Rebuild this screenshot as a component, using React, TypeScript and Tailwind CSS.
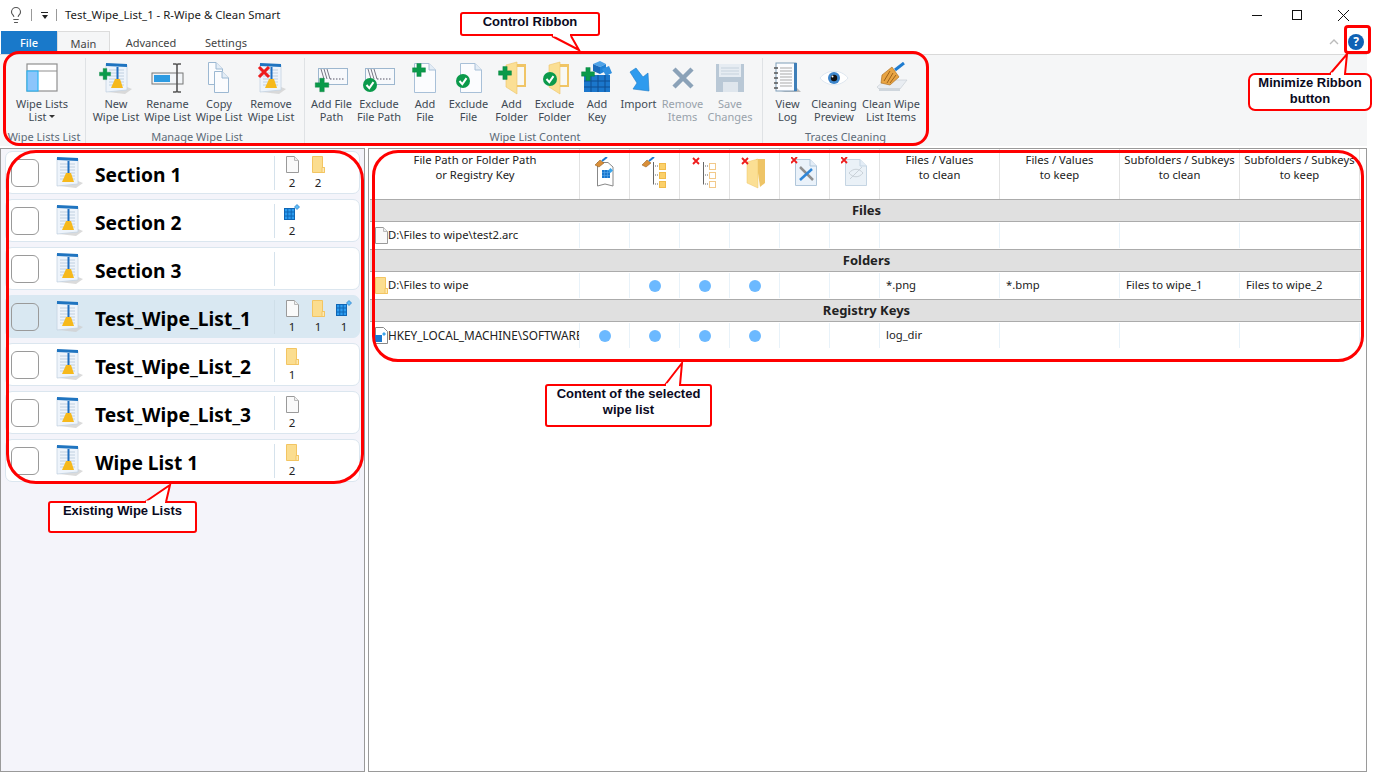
import React from "react";
import { Lightbulb } from "lucide-react";

const W = ({ children, w = 36, h = 36 }: { children: React.ReactNode; w?: number; h?: number }) => (
  <svg width={w} height={h} viewBox={`0 0 ${w} ${h}`} className="shrink-0">{children}</svg>
);

const Plus = ({ x, y, s = 1 }: { x: number; y: number; s?: number }) => (
  <path transform={`translate(${x} ${y}) scale(${s})`} d="M-3 -9H3V-3H9V3H3V9H-3V3H-9V-3H-3Z" fill="#0a9a4a" stroke="#087a3a" strokeWidth="0.5" />
);
const Check = ({ x, y, r = 7 }: { x: number; y: number; r?: number }) => (
  <g>
    <circle cx={x} cy={y} r={r} fill="#0b9a4b" />
    <path d={`M${x - r * 0.5} ${y}L${x - r * 0.1} ${y + r * 0.45}L${x + r * 0.5} ${y - r * 0.4}`} fill="none" stroke="#fff" strokeWidth="2" />
  </g>
);
const RedX = ({ x, y, s = 6 }: { x: number; y: number; s?: number }) => (
  <path d={`M${x - s} ${y - s}L${x + s} ${y + s}M${x + s} ${y - s}L${x - s} ${y + s}`} stroke="#ee1c1c" strokeWidth={s * 0.62} />
);
const DocBroom = () => (
  <g>
    <path d="M4 30L21 32L28 27L23 25Z" fill="#cfcfcf" opacity="0.75" />
    <path d="M2 2L23 3V28L2 30Z" fill="#eef4fb" stroke="#c4d3e2" strokeWidth="0.8" />
    <path d="M2 1L23 2V5L2 4Z" fill="#1f74c0" />
    <path d="M5 8H20M5 11H20M5 14H20M5 17H20M5 20H20M5 23H20" stroke="#b4c8da" strokeWidth="0.8" />
    <path d="M13.5 5V17" stroke="#1f6fc0" strokeWidth="2" />
    <path d="M11 17H16L19 26L7 26Z" fill="#f6b91c" />
  </g>
);
const WipeDoc = () => <W w={28} h={33}><DocBroom /></W>;

const DocShape = ({ x = 0, y = 0, w = 22, h = 30, fill = "#fbfcfe", stroke = "#a8c0d8" }: { x?: number; y?: number; w?: number; h?: number; fill?: string; stroke?: string }) => (
  <g>
    <path d={`M${x + 0.5} ${y + 0.5}H${x + w - 7}L${x + w - 0.5} ${y + 7}V${y + h - 0.5}H${x + 0.5}Z`} fill={fill} stroke={stroke} />
    <path d={`M${x + w - 7} ${y + 0.5}V${y + 7}H${x + w - 0.5}`} fill="#e4edf6" stroke={stroke} />
  </g>
);
const OpenFolder = () => (
  <g>
    <path d="M14 3H26V26H14Z" fill="#f0c566" />
    <path d="M16 6H24V24H16Z" fill="#f8f8f4" />
    <path d="M6 4L17 1V33L6 26Z" fill="#fbdf94" stroke="#eec566" strokeWidth="0.6" />
  </g>
);
const PathBox = () => (
  <g>
    <rect x="5.5" y="5.5" width="29" height="16" fill="#f7f9fc" stroke="#9db7cf" />
    <path d="M8 6L11 16M11 6L14 16M14 6L17 16" stroke="#556" strokeWidth="0.8" />
    <path d="M17 16H32" stroke="#556" strokeWidth="1.2" strokeDasharray="1.5 1.5" />
  </g>
);
const Cubes = () => (
  <g>
    <path d="M13 3L20 0L26 3L20 6Z" fill="#4ea3e8" />
    <path d="M13 3L20 6V13L13 10Z" fill="#1a6bbb" /><path d="M26 3L20 6V13L26 10Z" fill="#1f82d6" />
    <path d="M22 8L29 5L32 12L26 15Z" fill="#2f8fdf" />
    <path d="M4 14H30V31H4Z" fill="#1b77cc" />
    <path d="M4 20H30M4 26H30M11 14V31M18 14V31M25 14V31" stroke="#0e4f92" strokeWidth="1" />
  </g>
);

const icons: Record<string, React.ReactNode> = {
  list: <W w={32} h={30}><rect x="1" y="1" width="30" height="27" fill="#fff" stroke="#8f8f8f" strokeWidth="1.2" /><path d="M1 8H31" stroke="#8f8f8f" /><rect x="1" y="8" width="11" height="20" fill="#8cc5fb" stroke="#2db4f2" strokeWidth="1.2" /></W>,
  new: <W w={34} h={34}><g transform="translate(5 1)"><DocBroom /></g><Plus x={6} y={13} s={0.62} /></W>,
  rename: <W w={34} h={32}><rect x="1" y="11" width="31" height="11" fill="#f2f5f8" stroke="#777" /><rect x="3" y="13" width="16" height="7" fill="#2d9be2" /><path d="M26 3V29M22 2H25L26 3L27 2H30M22 30H25L26 29L27 30H30" stroke="#555" strokeWidth="1.6" fill="none" /></W>,
  copy: <W w={24} h={32}><DocShape x={1} y={0} w={15} h={23} stroke="#9cb8d2" /><DocShape x={7} y={9} w={15} h={22} stroke="#9cb8d2" /></W>,
  remove: <W w={30} h={34}><g transform="translate(2 1)"><DocBroom /></g><RedX x={8} y={11} s={5} /></W>,
  addpath: <W w={36} h={32}><g transform="translate(-1 1)"><PathBox /></g><Plus x={8} y={23} s={0.75} /></W>,
  excpath: <W w={36} h={32}><g transform="translate(-1 1)"><PathBox /></g><Check x={9} y={23} r={7} /></W>,
  addfile: <W w={26} h={32}><DocShape x={2} y={1} w={22} h={30} /><Plus x={7} y={8} s={0.72} /></W>,
  excfile: <W w={30} h={32}><DocShape x={6} y={1} w={22} h={30} /><Check x={9} y={19} r={7} /></W>,
  addfolder: <W w={28} h={34}><g transform="translate(2 0)"><OpenFolder /></g><Plus x={7} y={12} s={0.72} /></W>,
  excfolder: <W w={28} h={34}><g transform="translate(2 0)"><OpenFolder /></g><Check x={9} y={18} r={7} /></W>,
  addkey: <W w={34} h={34}><Cubes /><Plus x={8} y={13} s={0.72} /></W>,
  import: <W w={26} h={30}><path d="M4 9L10 5L17 14L22 10L23 28L7 26L11 20Z" fill="#2e9bee" stroke="#1a7bc8" strokeWidth="0.6" /></W>,
  delitems: <W w={24} h={24}><path d="M3 3L21 21M21 3L3 21" stroke="#8ba2b8" strokeWidth="4.5" /></W>,
  save: <W w={30} h={30}><path d="M1 1H29V29H1Z" fill="#b9c8d6" /><rect x="4" y="1" width="22" height="13" fill="#e6ecf2" /><path d="M6 5H24M6 8H24M6 11H24" stroke="#c6d2dd" /><rect x="8" y="19" width="15" height="10" fill="#dfe6ed" /></W>,
  log: <W w={30} h={32}><path d="M8 30L28 30L24 26Z" fill="#bbb" /><rect x="3" y="1" width="20" height="28" fill="#fbfcfe" stroke="#7f9db8" /><rect x="21" y="1" width="3" height="28" fill="#3f7fb8" /><path d="M7 6H19M7 9H19M7 12H19M7 15H19M7 18H19M7 21H19M7 24H19" stroke="#a9a9a9" /><path d="M1 6H5M1 11H5M1 16H5M1 21H5M1 26H5" stroke="#555" strokeWidth="1.4" /></W>,
  eye: <W w={30} h={18}><path d="M1 9C8 0 22 0 29 9C22 18 8 18 1 9Z" fill="#fff" stroke="#dfe7f0" /><circle cx="15" cy="9" r="6" fill="#3d86cc" /><circle cx="15" cy="9" r="3.2" fill="#111" /><circle cx="13.5" cy="7.5" r="1" fill="#fff" /></W>,
  clean: <W w={34} h={32}><path d="M3 25L11 18H33L26 27H5Z" fill="#e9edf2" stroke="#c2c9d0" strokeWidth="0.6" /><path d="M5 26H26V29H5Z" fill="#cfd6dd" /><path d="M8 13L18 5L25 15L16 23L7 21Z" fill="#e8a443" stroke="#a5661a" strokeWidth="0.6" /><path d="M10 19L16 9M13 21L19 11M16 21L22 13" stroke="#8a5210" strokeWidth="0.8" /><path d="M21 8L30 1" stroke="#1f7cd0" strokeWidth="3" /></W>,
};

type Btn = { i: string; l: string[]; w: string; off?: boolean; arrow?: boolean };
const RBtn = ({ b }: { b: Btn }) => (
  <div className={`flex flex-col items-center shrink-0 ${b.w}`}>
    <div className="h-[39px] w-full flex items-center justify-center">{icons[b.i]}</div>
    <div className={`text-center leading-[13px] whitespace-nowrap ${b.off ? "text-[#98a2ab]" : "text-[#3f4a54]"}`}>
      <div>{b.l[0]}</div>
      <div className="flex items-center justify-center gap-[3px]">
        {b.l[1]}
        {b.arrow && <span className="w-0 h-0 border-x-[3px] border-x-transparent border-t-[3px] border-t-[#333]" />}
      </div>
    </div>
  </div>
);
const Group = ({ label, w, pad, items, sep = true }: { label: string; w: string; pad: string; items: Btn[]; sep?: boolean }) => (
  <div className={`flex flex-col shrink-0 h-full ${w} ${pad} ${sep ? "border-r border-[#dfe2e5]" : ""}`}>
    <div className="flex h-[73px]">{items.map((b) => <RBtn key={b.i} b={b} />)}</div>
    <div className="mt-auto mb-[1px] text-center text-[#5d6b78] leading-[14px] whitespace-nowrap">{label}</div>
  </div>
);

const FileMini = () => <svg width="13" height="17" viewBox="0 0 13 17"><path d="M.5.5H8.5L12.5 4.5V16.5H.5Z" fill="#fafafa" stroke="#9a9a9a" /><path d="M8.5.5V4.5H12.5" fill="#eee" stroke="#bbb" /></svg>;
const FolderMini = () => <svg width="13" height="17" viewBox="0 0 13 17"><path d="M.5.5H10.5V11.5H12.5V16.5H.5Z" fill="#fbdd8f" stroke="#f3c562" /><path d="M10 11.5H12.5V16.5H10Z" fill="#fde9b4" stroke="#f3c562" /></svg>;
const KeyMini = () => <svg width="16" height="16" viewBox="0 0 16 16"><rect x="0.5" y="4.5" width="10" height="11" fill="#2b9cf0" stroke="#0f66b5" /><path d="M3.8 4.5V15.5M7.2 4.5V15.5M.5 8H10.5M.5 12H10.5" stroke="#0f66b5" /><path d="M13 .5L15.5 3L13 5.5L10.5 3Z" fill="#5ebcf7" stroke="#1c79c8" strokeWidth="0.7" /></svg>;

type M = { k: "f" | "d" | "r"; n: number };
const rows: { name: string; minis: M[]; sel?: boolean }[] = [
  { name: "Section 1", minis: [{ k: "f", n: 2 }, { k: "d", n: 2 }] },
  { name: "Section 2", minis: [{ k: "r", n: 2 }] },
  { name: "Section 3", minis: [] },
  { name: "Test_Wipe_List_1", sel: true, minis: [{ k: "f", n: 1 }, { k: "d", n: 1 }, { k: "r", n: 1 }] },
  { name: "Test_Wipe_List_2", minis: [{ k: "d", n: 1 }] },
  { name: "Test_Wipe_List_3", minis: [{ k: "f", n: 2 }] },
  { name: "Wipe List 1", minis: [{ k: "d", n: 2 }] },
];

const Card = ({ r }: { r: (typeof rows)[number] }) => (
  <div className={`h-[43px] flex items-center rounded-[7px] border ${r.sel ? "bg-[#d9e8f2] border-[#d9e8f2]" : "bg-white border-[#dbe6ef]"}`}>
    <div className="ml-[5px] w-[28px] h-[28px] rounded-[6px] border border-[#9a9a9a] shrink-0" />
    <div className="ml-[16px] w-[28px] shrink-0 flex"><WipeDoc /></div>
    <div className="ml-[12px] w-[179px] shrink-0 pt-[4px] font-bold text-[19.2px] leading-none text-black whitespace-nowrap">{r.name}</div>
    <div className={`h-[34px] w-px shrink-0 ${r.sel ? "bg-[#cfdfe9]" : "bg-[#d5e2ec]"}`} />
    <div className="flex pl-[4px]">
      {r.minis.map((m, i) => (
        <div key={i} className="w-[26px] h-[34px] flex flex-col items-center">
          <div className="h-[19px]">{m.k === "f" ? <FileMini /> : m.k === "d" ? <FolderMini /> : <KeyMini />}</div>
          <div className="leading-[15px] text-[11.5px] text-[#222]">{m.n}</div>
        </div>
      ))}
    </div>
  </div>
);

const Broomlet = () => <g><path d="M1 8L6 3L10 6L5 10Z" fill="#d98f3a" stroke="#8a5210" strokeWidth="0.5" /><path d="M8 4L13 0" stroke="#1f7cd0" strokeWidth="2" /></g>;
const Tree = ({ fill, stroke }: { fill: string; stroke: string }) => (
  <g>
    <path d="M12.5 5V27" stroke="#666" strokeWidth="1" />
    <path d="M12 9H18M12 18H18M12 27H18" stroke="#666" strokeWidth="1" strokeDasharray="1 1" />
    <rect x="18.5" y="6.5" width="6" height="6" fill={fill} stroke={stroke} /><rect x="18.5" y="15.5" width="6" height="6" fill={fill} stroke={stroke} /><rect x="18.5" y="24.5" width="6" height="6" fill={fill} stroke={stroke} />
  </g>
);
const headIcons: React.ReactNode[] = [
  <svg width="22" height="30" viewBox="0 0 22 30" key="a"><path d="M3.5 5.5H14L19 10V29L11 27L3.5 29Z" fill="#fff" stroke="#888" /><rect x="8" y="13" width="8" height="8" fill="#1a78cf" /><path d="M8 15.5H16M8 18.5H16M10.5 13V21M13.5 13V21" stroke="#5aa8e8" strokeWidth="0.6" /><path d="M16.5 11L19 13.5L16.5 16L14 13.5Z" fill="#3aa4ea" /><Broomlet /></svg>,
  <svg width="28" height="32" viewBox="0 0 28 32" key="b"><Broomlet /><Tree fill="#fbd06a" stroke="#f0bb4a" /></svg>,
  <svg width="28" height="32" viewBox="0 0 28 32" key="c"><RedX x={5} y={4} s={3} /><Tree fill="#fff" stroke="#f2c98a" /></svg>,
  <svg width="28" height="32" viewBox="0 0 28 32" key="d"><path d="M15 2H24V26L19 30Z" fill="#eec466" /><path d="M6 5L17 2V31L6 26Z" fill="#fbdf94" stroke="#eec566" strokeWidth="0.5" /><RedX x={4} y={4} s={3} /></svg>,
  <svg width="28" height="32" viewBox="0 0 28 32" key="e"><DocShape x={4} y={2} w={22} h={27} fill="#eaf2fa" stroke="#b0c6da" /><path d="M9 10L22 23" stroke="#8f8f8f" strokeWidth="2.5" /><path d="M21 12L9 23" stroke="#2e86d8" strokeWidth="2.5" /><RedX x={3} y={3} s={3} /></svg>,
  <svg width="28" height="32" viewBox="0 0 28 32" key="f"><DocShape x={4} y={2} w={22} h={27} fill="#eaf1f7" stroke="#c5d5e3" /><path d="M8 16C12 11 18 11 22 16C18 21 12 21 8 16ZM9 22L21 10" fill="none" stroke="#c9d1d8" /><RedX x={3} y={3} s={3} /></svg>,
];

const cols = "grid grid-cols-[209px_repeat(6,50px)_repeat(4,120px)]";
const headers = [["Files / Values", "to clean"], ["Files / Values", "to keep"], ["Subfolders / Subkeys", "to clean"], ["Subfolders / Subkeys", "to keep"]];

const GroupRow = ({ t }: { t: string }) => (
  <div className="h-[23px] bg-[#e0e0e0] border-y border-[#ababab] text-center font-bold text-[13px] leading-[20px] text-[#222]">{t}</div>
);
const Dot = () => <span className="block w-[12px] h-[12px] rounded-full bg-[#6cb9ff]" />;
const Data = ({ icon, path, pathCls = "", vals }: { icon: React.ReactNode; path: string; pathCls?: string; vals: (string | boolean)[] }) => (
  <div className={`${cols} h-[27px] ml-px`}>
    <div className="flex items-center border-r border-[#e8f2f9] pl-[4px] overflow-hidden my-px">
      <span className="w-[13px] shrink-0 flex">{icon}</span>
      <span className={`whitespace-nowrap ${pathCls}`}>{path}</span>
    </div>
    {vals.map((v, i) => (
      <div key={i} className={`flex items-center border-r border-[#e8f2f9] my-px ${i < 6 ? "justify-center" : "pl-[6px]"}`}>
        {v === true ? <Dot /> : v === false ? null : v}
      </div>
    ))}
  </div>
);

const Frame = ({ cls }: { cls: string }) => <div className={`absolute border-[3px] border-[#ff0000] pointer-events-none ${cls}`} />;
const Note = ({ cls, lines }: { cls: string; lines: string[] }) => (
  <div className={`absolute bg-white border-[2px] border-[#ff0000] text-center font-bold text-[13px] leading-[16px] text-[#0a0a1e] font-['Liberation_Sans',sans-serif] ${cls}`}>
    {lines.map((l) => <div key={l}>{l}</div>)}
  </div>
);

const rib1: Btn[] = [{ i: "list", l: ["Wipe Lists", "List"], w: "w-[78px]", arrow: true }];
const rib2: Btn[] = [
  { i: "new", l: ["New", "Wipe List"], w: "w-[52px]" },
  { i: "rename", l: ["Rename", "Wipe List"], w: "w-[51px]" },
  { i: "copy", l: ["Copy", "Wipe List"], w: "w-[52px]" },
  { i: "remove", l: ["Remove", "Wipe List"], w: "w-[52px]" },
];
const rib3: Btn[] = [
  { i: "addpath", l: ["Add File", "Path"], w: "w-[47px]" },
  { i: "excpath", l: ["Exclude", "File Path"], w: "w-[48px]" },
  { i: "addfile", l: ["Add", "File"], w: "w-[44px]" },
  { i: "excfile", l: ["Exclude", "File"], w: "w-[43px]" },
  { i: "addfolder", l: ["Add", "Folder"], w: "w-[43px]" },
  { i: "excfolder", l: ["Exclude", "Folder"], w: "w-[43px]" },
  { i: "addkey", l: ["Add", "Key"], w: "w-[42px]" },
  { i: "import", l: ["Import", ""], w: "w-[41px]" },
  { i: "delitems", l: ["Remove", "Items"], w: "w-[47px]", off: true },
  { i: "save", l: ["Save", "Changes"], w: "w-[48px]", off: true },
];
const rib4: Btn[] = [
  { i: "log", l: ["View", "Log"], w: "w-[45px]" },
  { i: "eye", l: ["Cleaning", "Preview"], w: "w-[48px]" },
  { i: "clean", l: ["Clean Wipe", "List Items"], w: "w-[66px]" },
];

export default function App() {
  return (
    <div className="relative w-[1374px] h-[773px] overflow-hidden bg-white flex flex-col font-['Noto_Sans',sans-serif] text-[11px] text-[#222]">
      {/* title bar */}
      <div className="h-[30px] shrink-0 flex items-center">
        <Lightbulb size={18} strokeWidth={1.5} className="ml-[7px] text-[#555]" />
        <span className="ml-[6px] w-px h-[12px] bg-[#999]" />
        <span className="ml-[9px] flex flex-col items-center gap-[2px]">
          <span className="w-[7px] h-px bg-[#222]" />
          <span className="w-0 h-0 border-x-[3.5px] border-x-transparent border-t-[4px] border-t-[#222]" />
        </span>
        <span className="ml-[8px] w-px h-[12px] bg-[#999]" />
        <span className="ml-[8px] text-[11.4px] whitespace-nowrap text-[#1a1a1a]">Test_Wipe_List_1 - R-Wipe &amp; Clean Smart</span>
        <div className="ml-auto flex items-center mr-[24px]">
          <svg width="11" height="11" viewBox="0 0 11 11"><path d="M0 5.5H10" stroke="#111" /></svg>
          <svg className="ml-[29px]" width="11" height="11" viewBox="0 0 11 11"><rect x="0.5" y="0.5" width="9" height="9" fill="none" stroke="#111" /></svg>
          <svg className="ml-[34px]" width="13" height="13" viewBox="0 0 13 13"><path d="M1 1L12 12M12 1L1 12" stroke="#111" /></svg>
        </div>
      </div>
      {/* tabs */}
      <div className="h-[24px] shrink-0 flex items-end pl-px">
        <div className="w-[56px] h-[23px] bg-[#1979ca] text-white text-center leading-[24px] font-medium">File</div>
        <div className="w-[53px] h-[23px] bg-[#f5f6f7] border-x border-t border-[#dcdcdc] text-center leading-[24px] text-[#444]">Main</div>
        <div className="w-[82px] h-[23px] text-center leading-[24px] text-[#444]">Advanced</div>
        <div className="w-[68px] h-[23px] text-center leading-[24px] text-[#444]">Settings</div>
        <div className="ml-auto mr-[10px] flex items-center h-[23px] gap-[9px] pb-[2px]">
          <svg width="10" height="6" viewBox="0 0 10 6"><path d="M1 5L5 1L9 5" fill="none" stroke="#bbb" strokeWidth="1.4" /></svg>
          <span className="w-[16px] h-[16px] rounded-full bg-[#0f62b5] text-white font-bold text-[12px] leading-[16px] text-center">?</span>
        </div>
      </div>
      {/* ribbon */}
      <div className="h-[92px] w-[1367px] shrink-0 bg-[#f5f6f7] border-t border-[#d9d9d9] flex pt-[3px] pb-[1px]">
        <Group label="Wipe Lists List" w="w-[86px]" pad="pl-[3px]" items={rib1} />
        <Group label="Manage Wipe List" w="w-[219px]" pad="pl-[4px]" items={rib2} />
        <Group label="Wipe List Content" w="w-[458px]" pad="pl-[3px]" items={rib3} />
        <Group label="Traces Cleaning" w="w-[163px]" pad="pl-[2px]" items={rib4} sep={false} />
      </div>
      {/* body */}
      <div className="flex-1 flex pt-[2px] pb-[1px] w-[1367px] gap-[3px] items-stretch">
        <div className="w-[365px] shrink-0 bg-[#f4f4fa] border border-[#9a9a9a] px-[4px] pt-[2px] flex flex-col gap-[5px]">
          {rows.map((r) => <Card key={r.name} r={r} />)}
        </div>
        <div className="flex-1 bg-white border border-[#9a9a9a] pl-px min-w-0">
          <div className={`${cols} h-[50px] ml-px`}>
            <div className="border-r border-[#e2e2e2] text-center text-[11.25px] leading-[15px] pt-[3px] text-[#222]">
              <div>File Path or Folder Path</div><div>or Registry Key</div>
            </div>
            {headIcons.map((ic, i) => <div key={i} className="border-r border-[#e2e2e2] flex justify-center pt-[8px]">{ic}</div>)}
            {headers.map((h, i) => (
              <div key={i} className="border-r border-[#e2e2e2] text-center text-[11.25px] leading-[15px] pt-[3px] text-[#222] whitespace-nowrap">
                <div>{h[0]}</div><div>{h[1]}</div>
              </div>
            ))}
          </div>
          <div className="w-[993px] text-[11.25px]">
            <GroupRow t="Files" />
            <Data icon={<FileMini />} path="D:\Files to wipe\test2.arc" vals={[false, false, false, false, false, false, false, false, false, false]} />
            <GroupRow t="Folders" />
            <Data icon={<FolderMini />} path="D:\Files to wipe" vals={[false, true, true, true, false, false, "*.png", "*.bmp", "Files to wipe_1", "Files to wipe_2"]} />
            <GroupRow t="Registry Keys" />
            <Data icon={<svg width="13" height="17" viewBox="0 0 13 17"><path d="M.5.5H8.5L12.5 4.5V16.5H.5Z" fill="#fff" stroke="#888" /><rect x="0" y="8" width="7" height="7" fill="#1a78cf" /><path d="M9 5L11 7L9 9L7 7Z" fill="#3aa4ea" /></svg>} path="HKEY_LOCAL_MACHINE\SOFTWARE" pathCls="text-[11.8px]" vals={[true, true, true, true, false, false, "log_dir", false, false, false]} />
          </div>
        </div>
      </div>

      {/* annotation overlay */}
      <Frame cls="left-[3px] top-[51px] w-[926px] h-[95px] rounded-[16px]" />
      <Frame cls="left-[6px] top-[150px] w-[358px] h-[334px] rounded-[30px]" />
      <Frame cls="left-[372px] top-[150px] w-[992px] h-[212px] rounded-[26px]" />
      <div className="absolute left-[1344px] top-[25px] w-[27px] h-[29px] border-[3px] border-[#ff0000] rounded-[4px]" />
      <Note cls="left-[460px] top-[12px] w-[140px] h-[24px] rounded-[3px]" lines={["Control Ribbon"]} />
      <Note cls="left-[1248px] top-[73px] w-[124px] h-[38px] rounded-[7px]" lines={["Minimize Ribbon", "button"]} />
      <Note cls="left-[545px] top-[384px] w-[167px] h-[43px] rounded-[3px]" lines={["Content of the selected", "wipe list"]} />
      <Note cls="left-[48px] top-[501px] w-[149px] h-[32px] rounded-[3px]" lines={["Existing Wipe Lists"]} />
      <svg className="absolute left-0 top-0 pointer-events-none" width="1374" height="773" viewBox="0 0 1374 773">
        <g fill="#fff" stroke="#ff0000" strokeWidth="2">
          <path d="M552 36L579 50L571 36" />
          <path d="M553 35H570" stroke="#fff" strokeWidth="3" />
          <path d="M1330 74L1347 54L1345 74" />
          <path d="M1331 74H1344" stroke="#fff" strokeWidth="3" />
          <path d="M665 385L682 363L680 385" />
          <path d="M666 385H679" stroke="#fff" strokeWidth="3" />
          <path d="M145 502L170 485L166 502" />
          <path d="M146 502H165" stroke="#fff" strokeWidth="3" />
        </g>
      </svg>
    </div>
  );
}
